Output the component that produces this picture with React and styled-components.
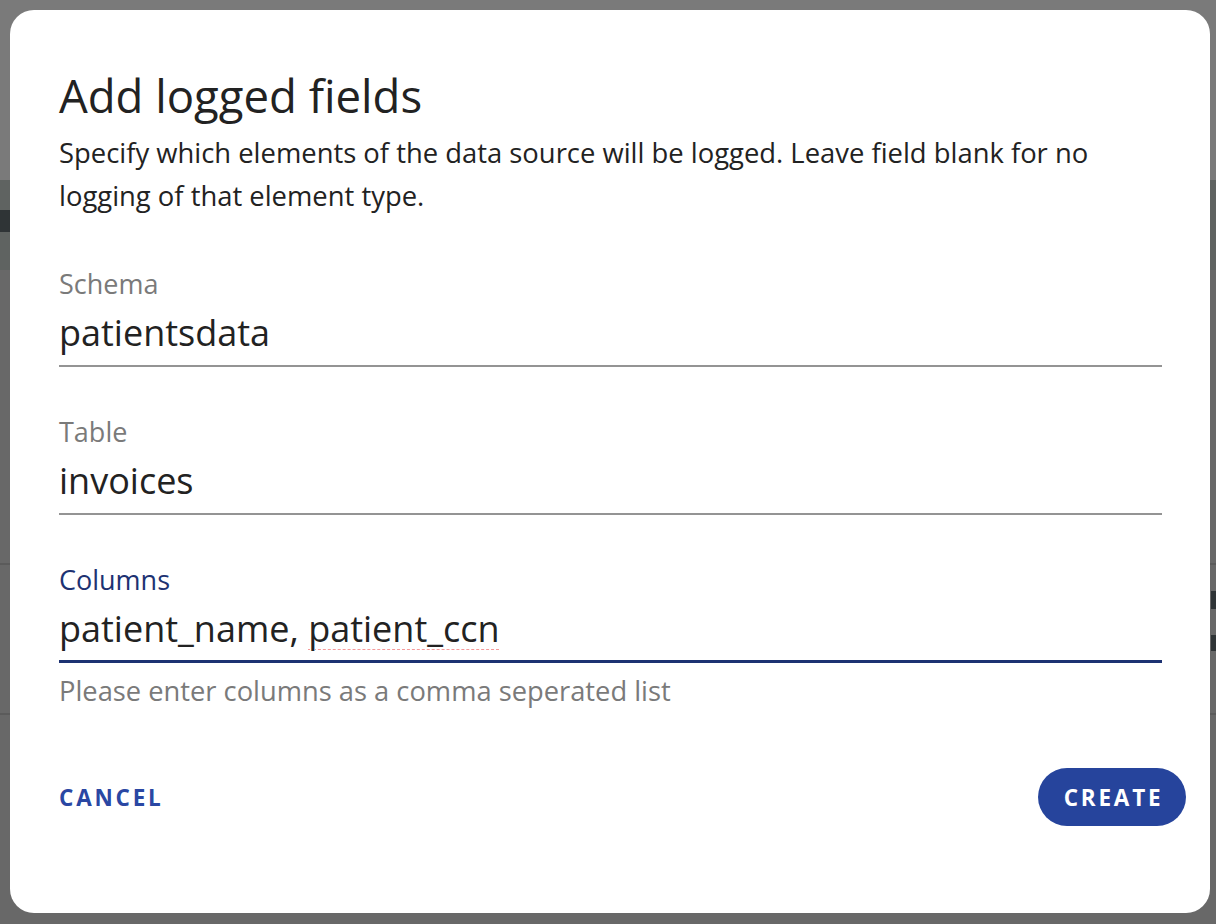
import React from "react";
import styled, { createGlobalStyle } from "styled-components";

const Global = createGlobalStyle`
  html, body { margin: 0; padding: 0; }
  body {
    width: 1216px;
    height: 924px;
    overflow: hidden;
    font-family: "Open Sans", "Noto Sans", sans-serif;
    background: #686868;
  }
  * { box-sizing: border-box; }
`;

/* ---------- dimmed page behind the dialog ---------- */
const Page = styled.div`
  display: flex;
  flex-direction: column;
  width: 1216px;
  height: 924px;
  background: #686868;
`;
const PageHeader = styled.div`
  height: 180px;
  background: #7a7a7a;
`;
const PageToolbar = styled.div`
  height: 90px;
  background: #5f6361;
  display: flex;
  align-items: center;
`;
const Glyph = styled.span`
  display: block;
  width: ${(p) => p.$w || 8}px;
  height: ${(p) => p.$h || 20}px;
  background: #2f3436;
  margin-top: ${(p) => p.$top || 0}px;
`;
const PageRows = styled.div`
  display: flex;
  flex-direction: column;
  padding-top: 293px;
`;
const PageRow = styled.div`
  height: 152px;
  border-top: 2px solid #5b5b5b;
  border-bottom: 2px solid #5b5b5b;
  display: flex;
  flex-direction: column;
  align-items: flex-end;
  gap: 26px;
  padding-top: 26px;
`;

/* ---------- dialog ---------- */
const Overlay = styled.div`
  position: fixed;
  inset: 0;
  display: flex;
  padding: 10px 6px 11px 10px;
`;
const Dialog = styled.div`
  flex: 1;
  background: #ffffff;
  border-radius: 24px;
  display: flex;
  flex-direction: column;
  padding: 57px 48px 87px 49px;
  color: #212121;
`;
const Title = styled.h2`
  margin: 0;
  font-size: 45.5px;
  line-height: 56px;
  font-weight: 400;
  color: #222;
`;
const Description = styled.p`
  margin: 8px 0 0;
  font-size: 27.4px;
  line-height: 43px;
  color: #222;
`;
const Fields = styled.div`
  display: flex;
  flex-direction: column;
  gap: 48px;
  margin-top: 50px;
`;
const Field = styled.div`
  display: flex;
  flex-direction: column;
`;
const Label = styled.label`
  font-size: 27px;
  line-height: 34px;
  color: ${(p) => (p.$focused ? "#1d3272" : "#7a7a7a")};
`;
const InputBox = styled.div`
  padding: 8px 0 ${(p) => (p.$focused ? 7 : 8)}px;
  border-bottom: ${(p) => (p.$focused ? "3px solid #1d3272" : "2px solid #949494")};
  font-size: 36px;
  line-height: 48px;
  color: #222;
  white-space: nowrap;
`;
const Misspelled = styled.span`
  text-decoration: underline dashed #f59a9a;
  text-decoration-thickness: 1px;
  text-underline-offset: 7px;
`;
const Helper = styled.div`
  margin-top: 11px;
  font-size: 27.3px;
  line-height: 34px;
  color: #7a7a7a;
`;
const Actions = styled.div`
  margin-top: 60px;
  margin-right: -24px;
  display: flex;
  align-items: center;
  justify-content: space-between;
`;
const TextButton = styled.button`
  border: none;
  background: none;
  padding: 0;
  font-family: inherit;
  font-size: 22.5px;
  font-weight: 700;
  letter-spacing: 2.8px;
  color: #2a47a3;
  cursor: pointer;
`;
const PillButton = styled.button`
  border: none;
  background: #26449c;
  color: #fff;
  height: 58px;
  width: 148px;
  border-radius: 29px;
  font-family: inherit;
  font-size: 22.5px;
  font-weight: 700;
  letter-spacing: 2.8px;
  padding: 0 0 0 3px;
  cursor: pointer;
`;

export default function App() {
  return (
    <>
      <Global />
      <Page>
        <PageHeader />
        <PageToolbar>
          <Glyph $w={10} $h={22} $top={-8} />
        </PageToolbar>
        <PageRows>
          <PageRow>
            <Glyph $w={5} $h={18} />
            <Glyph $w={5} $h={16} />
          </PageRow>
        </PageRows>
      </Page>
      <Overlay>
        <Dialog role="dialog" aria-labelledby="dlg-title">
          <Title id="dlg-title">Add logged fields</Title>
          <Description>
            Specify which elements of the data source will be logged. Leave field blank for no
            logging of that element type.
          </Description>
          <Fields>
            <Field>
              <Label>Schema</Label>
              <InputBox>patientsdata</InputBox>
            </Field>
            <Field>
              <Label>Table</Label>
              <InputBox>invoices</InputBox>
            </Field>
            <Field>
              <Label $focused>Columns</Label>
              <InputBox $focused>
                patient_name, <Misspelled>patient_ccn</Misspelled>
              </InputBox>
              <Helper>Please enter columns as a comma seperated list</Helper>
            </Field>
          </Fields>
          <Actions>
            <TextButton>CANCEL</TextButton>
            <PillButton>CREATE</PillButton>
          </Actions>
        </Dialog>
      </Overlay>
    </>
  );
}
